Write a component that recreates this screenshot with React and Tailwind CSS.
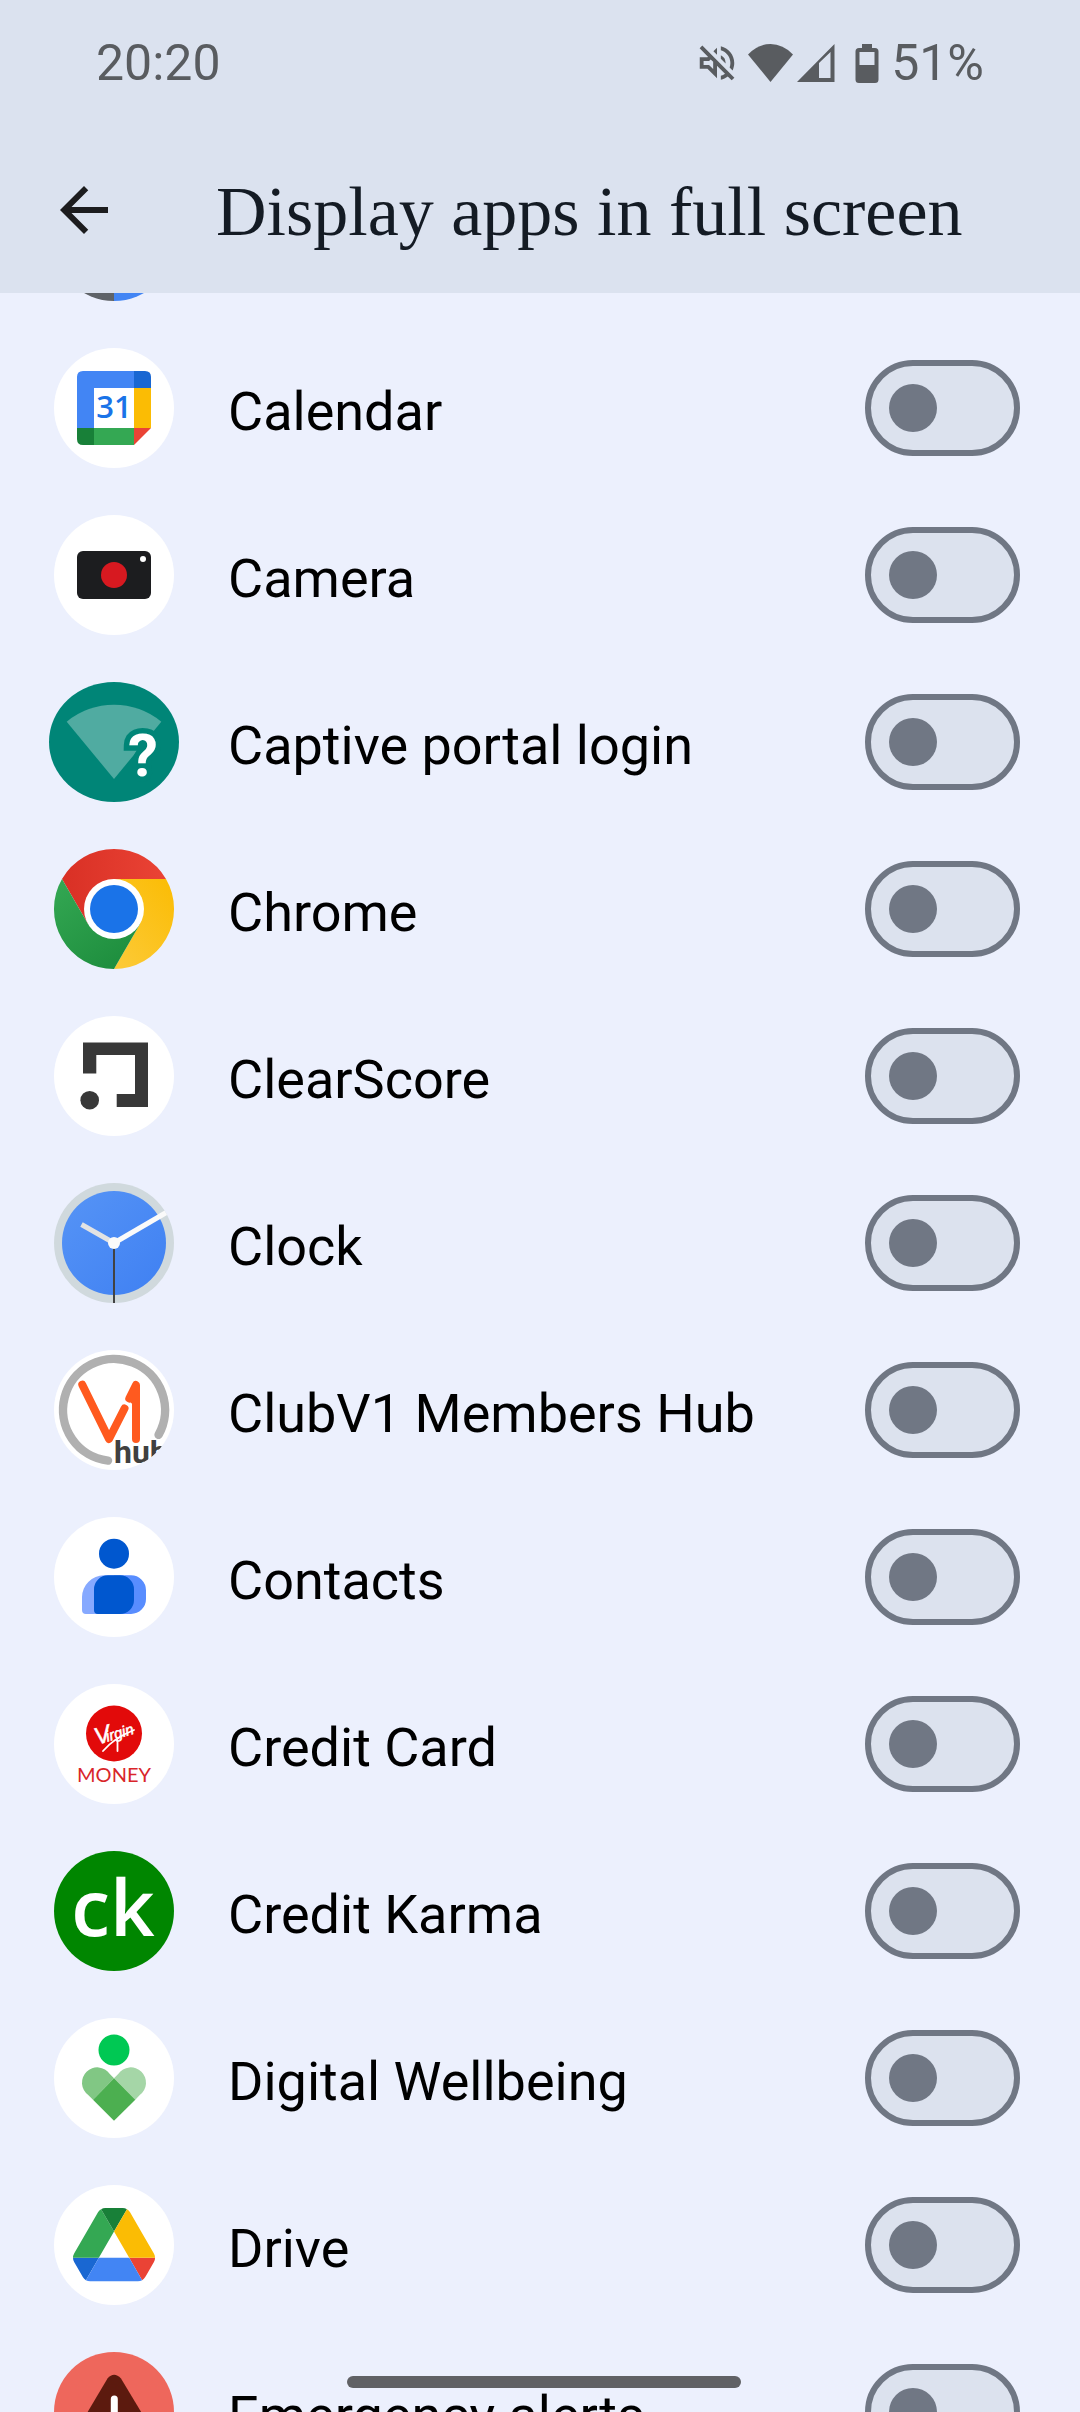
import { useLayoutEffect, useRef, useState } from 'react'

const Calculator = () => (
  <>
    <path d="M60 0A60 60 0 0 0 60 120Z" fill="#5f6368" />
    <path d="M60 0A60 60 0 0 1 60 120Z" fill="#4285f4" />
  </>
)

const Calendar = () => (
  <>
    <circle cx="60" cy="60" r="60" fill="#fff" />
    <path d="M29 23H80V40H40V80H23V29Q23 23 29 23Z" fill="#4285f4" />
    <path d="M80 23H91Q97 23 97 29V40H80Z" fill="#1967d2" />
    <path d="M80 40H97V80H80Z" fill="#fbbc04" />
    <path d="M23 80H40V97H29Q23 97 23 91Z" fill="#188038" />
    <path d="M40 80H80V97H40Z" fill="#34a853" />
    <path d="M80 80H97L80 97Z" fill="#ea4335" />
    <text x="60" y="70" textAnchor="middle" fontSize="31" className="font-['Open_Sans',sans-serif] font-semibold" fill="#1a73e8">31</text>
  </>
)

const Camera = () => (
  <>
    <circle cx="60" cy="60" r="60" fill="#fff" />
    <rect x="23" y="36" width="74" height="48" rx="6" fill="#1c1d1f" />
    <circle cx="60" cy="60" r="13" fill="#d71920" />
    <circle cx="89" cy="44" r="3" fill="#fff" />
  </>
)

const CaptivePortal = () => (
  <>
    <ellipse cx="60" cy="60" rx="65" ry="60" fill="#008577" />
    <path d="M12.7 39.7A74.3 74.3 0 0 1 107.3 39.7L60 97Z" fill="#50aba1" />
    <text x="89" y="94" textAnchor="middle" fontSize="60" className="font-['Roboto',sans-serif] font-bold [paint-order:stroke]" fill="#fff" stroke="#008577" strokeWidth="11">?</text>
  </>
)

const Chrome = () => (
  <>
    <defs>
      <linearGradient id="chromeRed" x1="0" x2="1">
        <stop offset="0" stopColor="#d93025" />
        <stop offset="1" stopColor="#ea4335" />
      </linearGradient>
      <linearGradient id="chromeGreen" x1="0" y1="0" x2="0.7" y2="1">
        <stop offset="0" stopColor="#34a853" />
        <stop offset="1" stopColor="#1e8e3e" />
      </linearGradient>
      <linearGradient id="chromeYellow" x1="1" y1="0" x2="0.2" y2="1">
        <stop offset="0" stopColor="#fbbc04" />
        <stop offset="1" stopColor="#fcc934" />
      </linearGradient>
    </defs>
    <path d="M8 30A60 60 0 0 1 112 30H60L34 75Z" fill="url(#chromeRed)" />
    <path d="M112 30A60 60 0 0 1 60 120L86 75L60 30Z" fill="url(#chromeYellow)" />
    <path d="M60 120A60 60 0 0 1 8 30L34 75H86Z" fill="url(#chromeGreen)" />
    <circle cx="60" cy="60" r="30" fill="#fff" />
    <circle cx="60" cy="60" r="24" fill="#1a73e8" />
  </>
)

const ClearScore = () => (
  <>
    <circle cx="60" cy="60" r="60" fill="#fff" />
    <path d="M29 26.5H94V91H62.7V78H81V39H42.3V57.5H29Z" fill="#383838" />
    <circle cx="35.7" cy="84.2" r="9.3" fill="#383838" />
  </>
)

const Clock = () => (
  <>
    <defs>
      <linearGradient id="clockFace" x1="0" y1="0" x2="1" y2="1">
        <stop offset="0" stopColor="#5694f6" />
        <stop offset="1" stopColor="#3f80f2" />
      </linearGradient>
      <clipPath id="clockClip">
        <circle cx="60" cy="60" r="60" />
      </clipPath>
    </defs>
    <circle cx="60" cy="60" r="60" fill="#d0d9dd" />
    <circle cx="60" cy="60" r="52" fill="url(#clockFace)" />
    <g clipPath="url(#clockClip)">
      <path d="M60 60L27.5 41.5" stroke="#e3e3e3" strokeWidth="5" />
      <path d="M60 60L114 28.5" stroke="#fafafa" strokeWidth="5" />
      <path d="M60 60V120" stroke="#424242" strokeWidth="2" />
    </g>
    <circle cx="60" cy="60" r="6" fill="#fafafa" />
  </>
)

const ClubV1 = () => (
  <>
    <defs>
      <clipPath id="clubClip">
        <circle cx="60" cy="60" r="60" />
      </clipPath>
    </defs>
    <circle cx="60" cy="60" r="60" fill="#fff" />
    <g fill="none" strokeLinecap="round" strokeLinejoin="round">
      <path d="M104.6 84.8A51 51 0 1 0 54 110.6" stroke="#b0b0b0" strokeWidth="8.5" />
      <path d="M28.3 34.7L55 89L70.5 58.5" stroke="#ff5a1f" strokeWidth="8" />
      <path d="M75.3 48.5L82 35V89M80 40V50" stroke="#ff5a1f" strokeWidth="8" />
    </g>
    <g clipPath="url(#clubClip)">
      <text x="60" y="113" fontSize="32" className="font-['Roboto',sans-serif] font-bold" fill="#404040">hub</text>
    </g>
  </>
)

const Contacts = () => (
  <>
    <circle cx="60" cy="60" r="60" fill="#fff" />
    <circle cx="60" cy="36.7" r="15" fill="#0057cf" />
    <path d="M50 58.3H60V97H32Q28 97 28 93V80A22 22 0 0 1 50 58.3Z" fill="#86a9ff" />
    <path d="M60 58.3H77A15 15 0 0 1 92 73.3V82A15 15 0 0 1 77 97H60Z" fill="#588dff" />
    <path d="M54 58.3H66A14 14 0 0 1 80 72.3V83A14 14 0 0 1 66 97H44Q40 97 40 93V72.3A14 14 0 0 1 54 58.3Z" fill="#0057cf" />
  </>
)

const CreditCard = () => (
  <>
    <circle cx="60" cy="60" r="60" fill="#fff" />
    <circle cx="60" cy="49.5" r="28" fill="#e20a0a" />
    <text x="43" y="61" fontSize="15" transform="rotate(-17 43 61)" className="font-['Liberation_Sans',sans-serif] italic" fill="#fff" stroke="#fff" strokeWidth="0.5">
      <tspan fontSize="24">V</tspan>
      <tspan dx="-5">irgin</tspan>
    </text>
    <path d="M49 67Q60 54 80 46" fill="none" stroke="#fff" strokeWidth="1.8" strokeLinecap="round" />
    <path d="M63.500 56V67" fill="none" stroke="#fff" strokeWidth="1.8" strokeLinecap="round" />
    <text x="60" y="98" textAnchor="middle" fontSize="20" className="font-['Lato',sans-serif]" fill="#d9252a">MONEY</text>
  </>
)

const CreditKarma = () => (
  <>
    <circle cx="60" cy="60" r="60" fill="#008600" />
    <text x="59" y="85" textAnchor="middle" fontSize="78" className="font-['Open_Sans',sans-serif] font-semibold" fill="#fff">ck</text>
  </>
)

const Wellbeing = () => (
  <>
    <circle cx="60" cy="60" r="60" fill="#fff" />
    <circle cx="60" cy="32" r="15.5" fill="#00c853" />
    <path d="M60 60.3L55.8 55.9A15.3 15.3 0 1 0 34.2 77L39 81.7Z" fill="#81c784" />
    <path d="M60 60.3L64.2 55.9A15.3 15.3 0 1 1 85.8 77L81.3 81.7Z" fill="#a5d6a7" />
    <path d="M60 60.3L81.3 81.7L60 102.7L39 81.7Z" fill="#4caf50" />
  </>
)

const Drive = () => (
  <>
    <circle cx="60" cy="60" r="60" fill="#fff" />
    <g transform="translate(19 23) scale(0.94)">
      <path d="m6.6 66.85 3.85 6.65c.8 1.4 1.95 2.5 3.3 3.3l13.75-23.8h-27.5c0 1.55.4 3.1 1.2 4.5z" fill="#1967d2" />
      <path d="m43.65 25-13.75-23.8c-1.35.8-2.5 1.9-3.3 3.3l-25.4 44a9.06 9.06 0 0 0 -1.2 4.5h27.5z" fill="#34a853" />
      <path d="m73.55 76.8c1.35-.8 2.5-1.9 3.3-3.3l1.6-2.75 7.65-13.25c.8-1.4 1.2-2.95 1.2-4.5h-27.5z" fill="#ea4335" />
      <path d="m43.65 25 13.75-23.8c-1.35-.8-2.9-1.2-4.5-1.2h-18.5c-1.6 0-3.15.45-4.5 1.2z" fill="#188038" />
      <path d="m59.8 53h-32.3l-13.75 23.8c1.35.8 2.9 1.2 4.5 1.2h50.8c1.6 0 3.15-.45 4.5-1.2z" fill="#4285f4" />
      <path d="m73.4 26.5-12.7-22c-.8-1.4-1.95-2.5-3.3-3.3l-13.75 23.8 16.15 28h27.45c0-1.55-.4-3.1-1.2-4.5z" fill="#fbbc04" />
    </g>
  </>
)

const Emergency = () => (
  <>
    <circle cx="60" cy="60" r="60" fill="#ee675c" />
    <path d="M53.5 26.5Q60 19 67 26.5L104 88Q105 93 99 94H21Q15 93 17 88Z" fill="#5c1a0e" />
    <path d="M60.3 47V68" stroke="#fff" strokeWidth="7" strokeLinecap="round" />
    <circle cx="60.3" cy="81" r="4" fill="#fff" />
  </>
)

const apps = [
  { id: 'calendar', name: 'Calendar', Icon: Calendar },
  { id: 'camera', name: 'Camera', Icon: Camera },
  { id: 'captive', name: 'Captive portal login', Icon: CaptivePortal },
  { id: 'chrome', name: 'Chrome', Icon: Chrome },
  { id: 'clearscore', name: 'ClearScore', Icon: ClearScore },
  { id: 'clock', name: 'Clock', Icon: Clock },
  { id: 'clubv1', name: 'ClubV1 Members Hub', Icon: ClubV1 },
  { id: 'contacts', name: 'Contacts', Icon: Contacts },
  { id: 'creditcard', name: 'Credit Card', Icon: CreditCard },
  { id: 'creditkarma', name: 'Credit Karma', Icon: CreditKarma },
  { id: 'wellbeing', name: 'Digital Wellbeing', Icon: Wellbeing },
  { id: 'drive', name: 'Drive', Icon: Drive },
  { id: 'emergency', name: 'Emergency alerts', Icon: Emergency },
]

const StatusBar = () => (
  <div className="flex h-31 items-center justify-between px-24 pt-[2px] text-[50px] leading-none text-[#595c60]">
    <span>20:20</span>
    <div className="flex items-center">
      {/* Muted */}
      <svg viewBox="0 0 24 24" className="size-[46px]" fill="currentColor">
        <path d="M4.34 2.93L2.93 4.34 7.29 8.7 7 9H3v6h4l5 5v-6.59l4.18 4.18c-.65.49-1.38.88-2.18 1.11v2.06c1.34-.3 2.57-.92 3.61-1.75l2.05 2.05 1.41-1.41L4.34 2.93zM10 15.17L7.83 13H5v-2h2.83l.88-.88L10 11.41v3.76zM19 12c0 .82-.15 1.61-.41 2.34l1.53 1.53c.56-1.17.88-2.48.88-3.87 0-4.28-2.99-7.86-7-8.77v2.06c2.89.86 5 3.54 5 6.71zm-7-8l-1.88 1.88L12 7.76zm4.5 8A4.5 4.5 0 0 0 14 7.97v1.79l2.48 2.48c.01-.08.02-.16.02-.24z" />
      </svg>
      {/* Wi-Fi */}
      <svg viewBox="0 0 45 38" className="ml-2 h-[38px] w-[45px]" fill="currentColor">
        <path d="M0 10.5Q10 0 22.5 0T45 10.5L22.5 38Z" />
      </svg>
      {/* Mobile signal */}
      <svg viewBox="0 0 38 38" className="ml-1 size-[38px]" fill="currentColor" fillRule="evenodd">
        <path d="M0 38L37.5 0V38ZM22 19V34H33.5V8Z" />
      </svg>
      {/* Battery */}
      <svg viewBox="0 0 24 39" className="ml-5 h-[39px] w-6" fill="currentColor" fillRule="evenodd">
        <path d="M7 0H17V4H20Q23.500 4 23.500 7.500V35.500Q23.500 39 20 39H4Q.5 39 .5 35.500V7.500Q.5 4 4 4H7ZM4.500 8V21H19.500V8Z" />
      </svg>
      <span className="ml-3">51%</span>
    </div>
  </div>
)

const AppRow = ({ id, name, Icon, checked, onToggle }) => (
  <li className="h-[167px] pb-px">
    <label htmlFor={id} className="flex h-full items-center gap-[54px] pl-[54px] pr-[60px]">
      <svg viewBox="0 0 120 120" className="size-30 shrink-0 overflow-visible" aria-hidden="true">
        <Icon />
      </svg>
      <span className="min-w-0 flex-1 pt-2 text-[54px] leading-none text-black">{name}</span>
      <input id={id} type="checkbox" role="switch" checked={checked} onChange={onToggle} className="peer sr-only" />
      <span className="flex h-24 w-[155px] shrink-0 items-center rounded-full border-6 border-[#707784] bg-[#dce2ee] px-[18px] peer-checked:justify-end">
        <span className="size-12 rounded-full bg-[#707784]" />
      </span>
    </label>
  </li>
)

const App = () => {
  const listRef = useRef(null)
  const [enabled, setEnabled] = useState({})

  // Start just past the first entry
  useLayoutEffect(() => {
    listRef.current.scrollTop = 135
  }, [])

  const toggle = (id) => setEnabled((prev) => ({ ...prev, [id]: !prev[id] }))

  return (
    <div className="relative flex h-screen flex-col overflow-hidden bg-[#ecf0fd] font-['Roboto',sans-serif]">
      <header className="shrink-0 bg-[#dbe2ef]">
        <StatusBar />
        <div className="flex h-[169px] items-center gap-24 pl-12 pt-[3px]">
          <button type="button" aria-label="Back" className="shrink-0 text-[#1c1c1e]">
            <svg viewBox="0 0 24 24" className="size-18" fill="currentColor">
              <path d="M20 11H7.830l5.590-5.590L12 4l-8 8 8 8 1.410-1.410L7.830 13H20v-2z" />
            </svg>
          </button>
          <h1 className="whitespace-nowrap pt-1 font-['Liberation_Serif',serif] text-[70px] leading-none text-[#141b24]">
            Display apps in full screen
          </h1>
        </div>
      </header>

      <ul ref={listRef} className="relative min-h-0 flex-1 overflow-y-auto [scrollbar-width:none]">
        {/* Calculator, scrolled almost out of view */}
        <li className="flex h-[167px] items-center pb-px pl-[54px]">
          <svg viewBox="0 0 120 120" className="size-30" role="img" aria-label="Calculator">
            <Calculator />
          </svg>
        </li>
        {apps.map((app) => (
          <AppRow key={app.id} {...app} checked={!!enabled[app.id]} onToggle={() => toggle(app.id)} />
        ))}
      </ul>

      {/* Gesture bar */}
      <div className="pointer-events-none absolute inset-x-0 bottom-6 flex justify-center pl-2">
        <div className="h-3 w-[394px] rounded-full bg-[#606165]" />
      </div>
    </div>
  )
}

export default App
